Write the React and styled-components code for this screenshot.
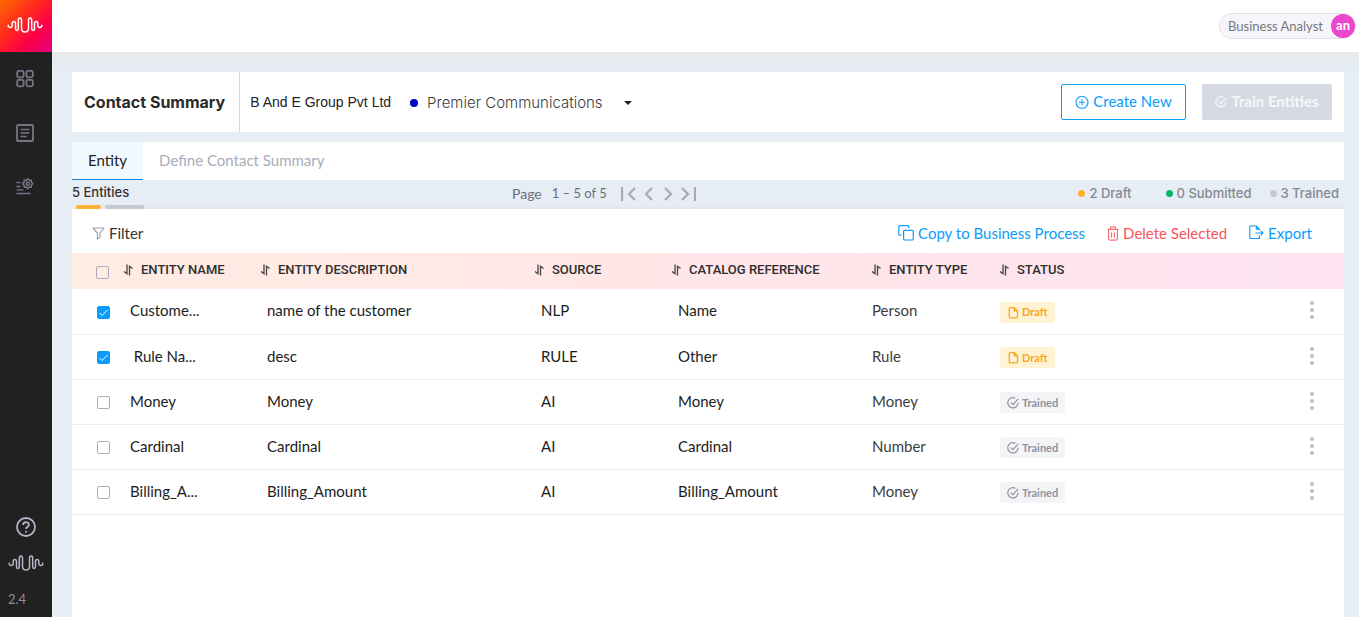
import React from "react";
import styled, { createGlobalStyle } from "styled-components";

const BODY_FONT = `Lato, "Open Sans", sans-serif`;
const WIDE_FONT = `Inter, "Open Sans", sans-serif`;

const GlobalStyle = createGlobalStyle`
  *, *::before, *::after { box-sizing: border-box; }
  html, body, #root { height: 100%; }
  body { margin: 0; font-family: ${BODY_FONT}; font-size: 15px; color: #222; background: #e6edf4; }
  button { font-family: inherit; color: inherit; cursor: pointer; padding: 0; border: 0; background: none; }
  a { text-decoration: none; color: inherit; }
  svg { display: block; flex: none; }
`;

const Shell = styled.div`
  display: flex;
  min-height: 100%;
`;

const Sidebar = styled.nav`
  position: relative;
  z-index: 1;
  flex: none;
  width: 52px;
  display: flex;
  flex-direction: column;
  background: #212121;
  color: #737684;
`;

const Logo = styled.a`
  display: flex;
  align-items: center;
  justify-content: center;
  height: 52px;
  padding: 0 2px 2px 0;
  color: #fff;
  background: linear-gradient(135deg, #ff6a00 0%, #ff2a1c 38%, #fb0048 68%, #e6007e 100%);
`;

const NavLinks = styled.div`
  display: flex;
  flex-direction: column;
  align-items: center;
  gap: 34px;
  padding: 17px 2px 0 0;
`;

const NavFooter = styled.div`
  display: flex;
  flex-direction: column;
  align-items: center;
  gap: 17px;
  margin-top: auto;
  padding-bottom: 8px;
  color: #b4b4c6;
`;

const Version = styled.span`
  align-self: flex-start;
  padding-left: 8px;
  font-size: 13px;
  line-height: 20px;
  color: #8e8e9c;
`;

const Content = styled.div`
  flex: 1;
  min-width: 0;
  display: flex;
  flex-direction: column;
`;

const TopBar = styled.header`
  display: flex;
  align-items: center;
  justify-content: flex-end;
  height: 52px;
  padding-right: 3px;
  background: #fff;
  box-shadow: 0 2px 14px rgba(228, 230, 224, 0.9);
`;

const UserChip = styled.button`
  display: flex;
  align-items: center;
  gap: 8px;
  height: 26px;
  padding-left: 8px;
  border: 1px solid #e2e1ea;
  border-radius: 13px;
  background: #f6f6fa;
  font-size: 13px;
  color: #75757f;
`;

const Avatar = styled.span`
  width: 24px;
  height: 24px;
  border-radius: 50%;
  background: #ec46cf;
  color: #fff;
  font-size: 13px;
  font-weight: 700;
  line-height: 22px;
  text-align: center;
`;

const Page = styled.main`
  flex: 1;
  display: flex;
  flex-direction: column;
  padding: 20px 15px 0 20px;
`;

const TitleBar = styled.section`
  display: flex;
  align-items: center;
  height: 60px;
  padding-right: 12px;
  background: #fff;
`;

const Title = styled.h1`
  display: flex;
  align-items: center;
  align-self: stretch;
  margin: 0;
  padding: 0 14px 0 12px;
  border-right: 1px solid #d5d5e0;
  font: 700 16px/20px ${WIDE_FONT};
  color: #2b2b2b;
`;

const Company = styled.span`
  padding-left: 10px;
  font: 14px/20px "Liberation Sans", sans-serif;
`;

const Picker = styled.button`
  display: flex;
  align-items: center;
  margin-left: 19px;
  padding-top: 2px;
  font: 300 15px/20px ${WIDE_FONT};
  color: #3c3c3c;
`;

const Dot = styled.i`
  width: ${(p) => p.$size}px;
  height: ${(p) => p.$size}px;
  margin-right: ${(p) => p.$gap}px;
  border-radius: 50%;
  background: ${(p) => p.$color};
`;

const Caret = styled.i`
  margin-left: 21px;
  border: 4px solid transparent;
  border-top-color: #222;
  border-bottom: 0;
`;

const TitleActions = styled.div`
  display: flex;
  gap: 16px;
  margin-left: auto;
`;

const MainButton = styled.button`
  display: flex;
  align-items: center;
  justify-content: center;
  gap: 4px;
  width: ${(p) => p.$width}px;
  height: 36px;
  padding-bottom: 2px;
  border-radius: 2px;
  font-size: 15px;
  border: 1px solid ${(p) => (p.disabled ? "#d5dae2" : "#0a9cfb")};
  color: ${(p) => (p.disabled ? "#f6f7f9" : "#0a9cfb")};
  background: ${(p) => (p.disabled ? "#d5dae2" : "#fff")};
  font-weight: ${(p) => (p.disabled ? 700 : 400)};
`;

const Tabs = styled.div`
  display: flex;
  height: 38px;
  margin-top: 10px;
  background: #fff;
`;

const Tab = styled.button`
  padding: 0 16px 2px;
  font-size: 15px;
  line-height: 20px;
  color: ${(p) => (p.$active ? "#222" : "#a9acba")};
  background: ${(p) => (p.$active ? "#f1f9ff" : "transparent")};
  border-bottom: 1px solid ${(p) => (p.$active ? "#0a86e6" : "transparent")};
`;

const Summary = styled.div`
  display: grid;
  grid-template-columns: 440px auto 1fr;
  align-items: start;
  height: 29px;
  background: linear-gradient(#e6edf4 80%, #e6e9ec);
`;

const EntityCount = styled.div`
  font: 500 13px/25px ${WIDE_FONT};
  color: #333;
`;

const Progress = styled.div`
  display: flex;
  gap: 4px;
  padding: 0 4px;
`;

const Segment = styled.i`
  width: ${(p) => p.$width}px;
  height: 4px;
  border-radius: 2px;
  background: ${(p) => p.$color};
`;

const Pager = styled.div`
  display: flex;
  align-items: center;
  height: 26px;
  font-size: 14px;
  color: #6b6f78;
`;

const PageRange = styled.span`
  padding: 0 14px 0 10px;
  font-size: 13px;
`;

const PageButtons = styled.div`
  display: flex;
  gap: 7px;
  padding-top: 2px;
  color: #a8abb0;
`;

const Legend = styled.ul`
  display: flex;
  justify-content: flex-end;
  gap: 18px;
  margin: 0;
  padding: 0 5px 0 0;
  list-style: none;
  font: 500 13px/26px ${WIDE_FONT};
  color: #858893;
`;

const LegendItem = styled.li`
  display: flex;
  align-items: center;
  &:first-child { margin-right: 16px; }
`;

const Panel = styled.section`
  flex: 1;
  background: #fff;
`;

const Toolbar = styled.div`
  display: flex;
  align-items: center;
  height: 44px;
  padding: 4px 32px 0 20px;
`;

const ToolButton = styled.button`
  display: flex;
  align-items: center;
  gap: 4px;
  font-size: 15px;
  line-height: 20px;
  color: ${(p) => p.$color};
`;

const ToolActions = styled.div`
  display: flex;
  gap: 22px;
  margin-left: auto;
`;

const Table = styled.table`
  width: 100%;
  table-layout: fixed;
  border-collapse: collapse;
`;

const HeadRow = styled.tr`
  height: 36px;
  background: linear-gradient(90deg, #ffece2, #ffe6e8 50%, #fde3f2);
`;

const HeadCell = styled.th`
  padding: 0 0 2px ${(p) => p.$pad ?? 3}px;
  text-align: left;
  font-weight: 400;
`;

const SortButton = styled.button`
  display: flex;
  align-items: center;
  gap: 7px;
  font: 500 13px/20px Roboto, sans-serif;
  white-space: nowrap;
  color: #2e2e2e;
`;

const Row = styled.tr`
  height: 45px;
  border-bottom: 1px solid #e6edf4;
`;

const Cell = styled.td`
  padding: 0 0 2px ${(p) => p.$pad ?? 10}px;
  font-size: 15px;
  line-height: 20px;
  white-space: nowrap;
  color: ${(p) => (p.$soft ? "#3c3c3c" : "#1c1c1c")};
`;

const Checkbox = styled.input.attrs({ type: "checkbox" })`
  appearance: none;
  display: block;
  width: 13px;
  height: 13px;
  margin: 4px 0 0;
  border: 1px solid #adadc0;
  border-radius: 2px;
  background: transparent center / 11px 11px no-repeat;
  &:checked {
    border-color: #0a9cfb;
    background-color: #0a9cfb;
    background-image: url("data:image/svg+xml,%3Csvg xmlns='http://www.w3.org/2000/svg' viewBox='0 0 11 11' fill='none' stroke='white'%3E%3Cpath d='M1.5 6l2.5 2.5L9.5 3'/%3E%3C/svg%3E");
  }
`;

const Badge = styled.span`
  display: flex;
  width: max-content;
  align-items: center;
  gap: 3px;
  height: 21px;
  margin-top: 4px;
  padding: 0 7px;
  border-radius: 3px;
  font-size: 11px;
  font-weight: 700;
  color: ${(p) => (p.$draft ? "#fba524" : "#9292a3")};
  background: ${(p) => (p.$draft ? "#fff3d4" : "#f2f4f6")};
`;

const MenuButton = styled.button`
  display: block;
  color: #bfbfcf;
`;

const Wave = () => (
  <svg width="36" height="18" viewBox="0 0 36 18" fill="none" stroke="currentColor" strokeWidth="1.5" strokeLinecap="round">
    <path d="M1.2 9.3c0 3 4 3 4 0V7.6c0-2.8 3.3-2.8 3.3 0v5.2c0 2.3 2.8 2.3 2.8 0V4.2c0-3 3.2-3 3.2 0v8.1c0 4.9 7 4.9 7 0V4.2c0-3 3.2-3 3.2 0v8.6c0 2.3 2.8 2.3 2.8 0V7.6c0-2.8 3.3-2.8 3.3 0v1.7c0 3 4 3 4 0" />
  </svg>
);

const GridIcon = () => (
  <svg width="20" height="20" viewBox="0 0 20 20" fill="none" stroke="currentColor" strokeWidth="1.8">
    <rect x="2.2" y="1.9" width="6.4" height="6.4" rx="1.5" />
    <rect x="11.4" y="1.9" width="6.4" height="6.4" rx="1.5" />
    <rect x="2.2" y="10.9" width="6.4" height="6.4" rx="1.5" />
    <rect x="11.4" y="10.9" width="6.4" height="6.4" rx="1.5" />
  </svg>
);

const DocIcon = () => (
  <svg width="20" height="20" viewBox="0 0 20 20" fill="none" stroke="currentColor" strokeWidth="1.8">
    <rect x="2" y="2" width="16" height="16" rx="1" />
    <path d="M5.5 6.5h9M5.5 10h9M5.5 13.5h6" strokeWidth="1.5" />
  </svg>
);

const RulesIcon = () => (
  <svg width="20" height="20" viewBox="0 0 20 20" fill="none" stroke="currentColor" strokeWidth="1.5">
    <path d="M1.5 5.5h4M1.5 9.5h4M1.5 12.8h7M1.5 16.5h14" strokeWidth="1.3" />
    <path d="M12.7 1.8l1.4 1.5 2-.2.3 2 1.4 1.6-1.4 1.5-.3 2-2-.1-1.4 1.5-1.4-1.5-2 .1-.3-2-1.4-1.5 1.4-1.6.3-2 2 .2z" />
    <circle cx="12.7" cy="6.7" r="1.6" />
  </svg>
);

const HelpIcon = () => (
  <svg width="20" height="20" viewBox="0 0 20 20" fill="none" stroke="currentColor" strokeWidth="1.8">
    <circle cx="10" cy="10" r="9" />
    <path d="M7.2 8c0-3.8 5.7-3.6 5.7-.3 0 2.1-2.8 2.1-2.8 4.2M10.1 13.8v1.6" />
  </svg>
);

const PlusIcon = () => (
  <svg width="14" height="16" viewBox="0 0 14 16" fill="none" stroke="currentColor" strokeWidth="1.1">
    <circle cx="7" cy="9.3" r="6" />
    <path d="M7 6.3v6M4 9.3h6" />
  </svg>
);

const CheckCircle = () => (
  <svg width="12" height="13" viewBox="0 0 12 13" fill="none" stroke="currentColor" strokeWidth="1.2">
    <path d="M8.3 2.3A5.1 5.1 0 1 0 11 6.8" />
    <path d="M3.7 6.6l2.2 2L11.2 2.8" />
  </svg>
);

const FunnelIcon = () => (
  <svg width="13" height="13" viewBox="0 0 13 13" fill="none" stroke="#a0a0b5" strokeWidth="1.2" strokeLinejoin="round">
    <path d="M1 1h11L8 6v4.2l-2.6 1.7V6z" />
  </svg>
);

const CopyIcon = () => (
  <svg width="16" height="16" viewBox="0 0 16 16" fill="none" stroke="currentColor" strokeWidth="1.2">
    <rect x="5.6" y="5.3" width="9.7" height="9.7" rx="1" />
    <path d="M3.2 10.3H2a1.2 1.2 0 0 1-1.2-1.2V1.9A1.2 1.2 0 0 1 2 .7h7.5a1.2 1.2 0 0 1 1.2 1.2v1.2" />
  </svg>
);

const TrashIcon = () => (
  <svg width="12" height="15" viewBox="0 0 12 15" fill="none" stroke="currentColor" strokeWidth="1">
    <path d="M.5 3.3h11M3.5 3V1h5v2M1.6 3.5v9.6q0 1 1 1h6.8q1 0 1-1V3.5M4.6 6.5v5M7.4 6.5v5" />
  </svg>
);

const ExportIcon = () => (
  <svg width="15" height="16" viewBox="0 0 15 16" fill="none" stroke="currentColor" strokeWidth="1.1">
    <path d="M10.4 10.5V13.5H.8V1h6.5l3.1 3.1v1.2M7.3 1v3.1h3.1M6.5 8h7.5M11.7 5.6L14 8l-2.3 2.4" />
  </svg>
);

const SortIcon = () => (
  <svg width="11" height="12" viewBox="0 0 11 12" fill="none" stroke="#444" strokeWidth="1.3">
    <path d="M4 .5v9.3L1 7.5M6.5 11.5V2.2l3 2.3" />
  </svg>
);

const FileIcon = () => (
  <svg width="12" height="13" viewBox="0 0 12 13" fill="none" stroke="currentColor" strokeWidth="1.3">
    <path d="M7.3 1.6H3.4Q2.3 1.6 2.3 2.7v8q0 1.1 1.1 1.1h6q1.1 0 1.1-1.1V4.9zM7.3 1.6v3.3h3.2" />
  </svg>
);

const DotsIcon = () => (
  <svg width="4" height="18" viewBox="0 0 4 18" fill="currentColor">
    <circle cx="2" cy="2" r="2" />
    <circle cx="2" cy="9" r="2" />
    <circle cx="2" cy="16" r="2" />
  </svg>
);

const PageIcon = ({ d, width }) => (
  <svg width={width} height="14" viewBox={`0 0 ${width} 14`} fill="none" stroke="currentColor" strokeWidth="2.2">
    <path d={d} />
  </svg>
);

const PAGE_STEPS = [
  { label: "First page", width: 15, d: "M1 0v14M14 1L8 7l6 6" },
  { label: "Previous page", width: 12, d: "M9 1L3 7l6 6" },
  { label: "Next page", width: 12, d: "M3 1l6 6-6 6" },
  { label: "Last page", width: 15, d: "M1 1l6 6-6 6M14 0v14" },
];

const LEGEND = [
  { color: "#fdae33", text: "2 Draft" },
  { color: "#00b865", text: "0 Submitted" },
  { color: "#c8c8d3", text: "3 Trained" },
];

const COLUMNS = ["ENTITY NAME", "ENTITY DESCRIPTION", "SOURCE", "CATALOG REFERENCE", "ENTITY TYPE", "STATUS"];

const ROWS = [
  { name: "Custome...", desc: "name of the customer", source: "NLP", ref: "Name", type: "Person", draft: true },
  { name: "\u00a0Rule Na...", desc: "desc", source: "RULE", ref: "Other", type: "Rule", draft: true },
  { name: "Money", desc: "Money", source: "AI", ref: "Money", type: "Money" },
  { name: "Cardinal", desc: "Cardinal", source: "AI", ref: "Cardinal", type: "Number" },
  { name: "Billing_A...", desc: "Billing_Amount", source: "AI", ref: "Billing_Amount", type: "Money" },
];

export default function App() {
  return (
    <Shell>
      <GlobalStyle />
      <Sidebar>
        <Logo href="#" aria-label="Home"><Wave /></Logo>
        <NavLinks>
          <a href="#dashboard" aria-label="Dashboard"><GridIcon /></a>
          <a href="#documents" aria-label="Documents"><DocIcon /></a>
          <a href="#rules" aria-label="Rules"><RulesIcon /></a>
        </NavLinks>
        <NavFooter>
          <a href="#help" aria-label="Help"><HelpIcon /></a>
          <Wave />
          <Version>2.4</Version>
        </NavFooter>
      </Sidebar>
      <Content>
        <TopBar>
          <UserChip>Business Analyst<Avatar>an</Avatar></UserChip>
        </TopBar>
        <Page>
          <TitleBar>
            <Title>Contact Summary</Title>
            <Company>B And E Group Pvt Ltd</Company>
            <Picker>
              <Dot $size={8} $gap={9} $color="#0008c4" />
              Premier Communications
              <Caret />
            </Picker>
            <TitleActions>
              <MainButton $width={125}><PlusIcon />Create New</MainButton>
              <MainButton $width={130} disabled><CheckCircle />Train Entities</MainButton>
            </TitleActions>
          </TitleBar>
          <Tabs>
            <Tab $active>Entity</Tab>
            <Tab>Define Contact Summary</Tab>
          </Tabs>
          <Summary>
            <EntityCount>
              5 Entities
              <Progress>
                <Segment $width={25} $color="#fdb338" />
                <Segment $width={39} $color="#c8c8d3" />
              </Progress>
            </EntityCount>
            <Pager>
              Page
              <PageRange>1 – 5 of 5</PageRange>
              <PageButtons>
                {PAGE_STEPS.map((s) => (
                  <button key={s.label} aria-label={s.label}><PageIcon d={s.d} width={s.width} /></button>
                ))}
              </PageButtons>
            </Pager>
            <Legend>
              {LEGEND.map((l) => (
                <LegendItem key={l.text}><Dot $size={7} $gap={4} $color={l.color} />{l.text}</LegendItem>
              ))}
            </Legend>
          </Summary>
          <Panel>
            <Toolbar>
              <ToolButton $color="#333"><FunnelIcon />Filter</ToolButton>
              <ToolActions>
                <ToolButton $color="#0a9cfb"><CopyIcon />Copy to Business Process</ToolButton>
                <ToolButton $color="#fa5359"><TrashIcon />Delete Selected</ToolButton>
                <ToolButton $color="#0a9cfb"><ExportIcon />Export</ToolButton>
              </ToolActions>
            </Toolbar>
            <Table>
              <colgroup>
                <col width="48" /><col width="137" /><col width="274" /><col width="137" />
                <col width="200" /><col width="128" /><col /><col width="34" />
              </colgroup>
              <thead>
                <HeadRow>
                  <HeadCell $pad={24}><Checkbox aria-label="Select all" /></HeadCell>
                  {COLUMNS.map((c) => (
                    <HeadCell key={c}><SortButton><SortIcon />{c}</SortButton></HeadCell>
                  ))}
                  <HeadCell />
                </HeadRow>
              </thead>
              <tbody>
                {ROWS.map((r) => (
                  <Row key={r.name}>
                    <Cell $pad={25}><Checkbox aria-label={`Select ${r.name}`} defaultChecked={r.draft} /></Cell>
                    <Cell>{r.name}</Cell>
                    <Cell>{r.desc}</Cell>
                    <Cell>{r.source}</Cell>
                    <Cell>{r.ref}</Cell>
                    <Cell $pad={4} $soft>{r.type}</Cell>
                    <Cell $pad={4}>
                      <Badge $draft={r.draft}>
                        {r.draft ? <FileIcon /> : <CheckCircle />}
                        {r.draft ? "Draft" : "Trained"}
                      </Badge>
                    </Cell>
                    <Cell $pad={0}><MenuButton aria-label="Row actions"><DotsIcon /></MenuButton></Cell>
                  </Row>
                ))}
              </tbody>
            </Table>
          </Panel>
        </Page>
      </Content>
    </Shell>
  );
}
